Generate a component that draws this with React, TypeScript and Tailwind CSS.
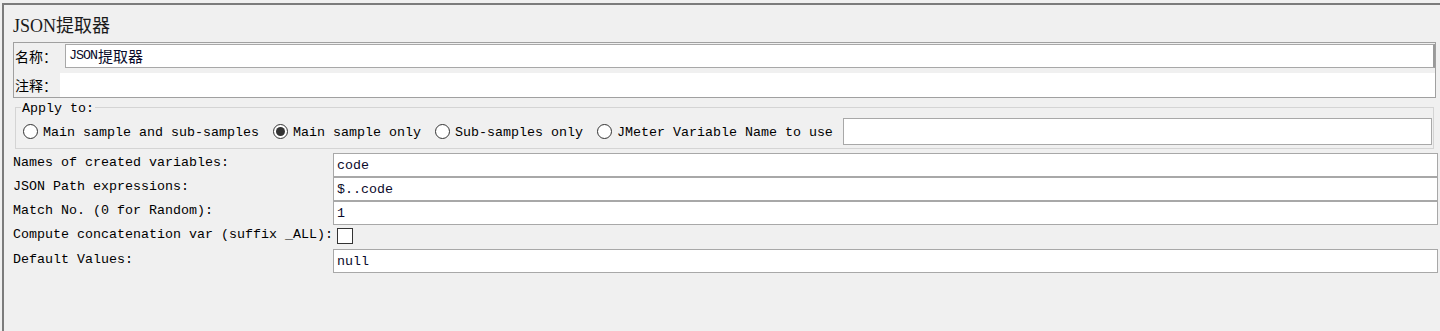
import React from "react";

const mono = "font-['Liberation_Mono','Noto_Sans_CJK_SC',monospace] text-[13.33px]";

function Radio({ checked }: { checked?: boolean }) {
  return (
    <span className="w-[15px] h-[15px] rounded-full border border-[#333] bg-white flex items-center justify-center shrink-0">
      {checked && <span className="w-[9px] h-[9px] rounded-full bg-[#333]" />}
    </span>
  );
}

function RadioItem({ label, checked, last }: { label: string; checked?: boolean; last?: boolean }) {
  return (
    <div className={`flex items-center gap-[5px] ${last ? "mr-[10px]" : "mr-[14px]"}`}>
      <Radio checked={checked} />
      <span className="whitespace-nowrap leading-[16px] pt-[2px]">{label}</span>
    </div>
  );
}

function FieldRow({ label, value, pt = "pt-[2px]" }: { label: string; value: string; pt?: string }) {
  return (
    <div className="flex h-[24px]">
      <div className={`w-[320px] ${pt} leading-[16px] whitespace-nowrap`}>{label}</div>
      <div className="w-[1105px] h-[24px] border border-[#a8a8a8] bg-white pl-[3px] pt-[1px] flex items-center text-[#0a0a2a]">
        {value}
      </div>
    </div>
  );
}

export default function App() {
  return (
    <div className="w-[1440px] h-[331px] bg-[#f0f0f0] pt-[3px] pl-[2px] overflow-hidden text-black">
      <div className="h-full border-t-2 border-l-2 border-[#7c7c7c] pl-[9px]">
        <div className="mt-[8px] h-[26px] leading-[26px] text-[18px] text-[#1a1a1a] font-['Liberation_Serif','Noto_Sans_CJK_SC',serif] whitespace-nowrap">
          JSON提取器
        </div>

        <div className="mt-[3px] w-[1423px] border border-[#a0a0a0]">
          <div className="flex h-[26px] items-center">
            <div className="w-[51px] pl-[1px] text-[14px] font-['Noto_Sans_CJK_SC',sans-serif] leading-[20px]">名称：</div>
            <div className="flex-1 h-[24px] border border-[#a8a8a8] border-r-[#9a9a9a] border-r-2 bg-white pl-[3px] flex items-center whitespace-nowrap text-[#0a0a2a]">
              <span className="font-['Liberation_Mono',monospace] text-[13.33px] tracking-[-1px]">JSON</span>
              <span className="font-['Noto_Sans_CJK_SC',sans-serif] text-[15px] leading-[18px] ml-[1px]">提取器</span>
            </div>
          </div>
          <div className="h-[4px]" />
          <div className="flex h-[24px] items-center">
            <div className="w-[46px] pl-[1px] text-[14px] font-['Noto_Sans_CJK_SC',sans-serif] leading-[20px]">注释：</div>
            <div className="flex-1 h-full bg-white" />
          </div>
        </div>

        <fieldset className={`-mt-[1px] ml-[2px] w-[1419px] border border-[#d4d4d4] ${mono}`}>
          <legend className="ml-[5px] px-[1px] pt-[4px] leading-[16px]">Apply to:</legend>
          <div className="flex items-center pl-[7px] pr-[1px] pt-[1px] pb-[3px]">
            <RadioItem label="Main sample and sub-samples" />
            <RadioItem label="Main sample only" checked />
            <RadioItem label="Sub-samples only" />
            <RadioItem label="JMeter Variable Name to use" last />
            <div className="flex-1 h-[27px] border border-[#a8a8a8] bg-white" />
          </div>
        </fieldset>

        <div className={`mt-[4px] flex flex-col ${mono}`}>
          <FieldRow label="Names of created variables:" value="code" />
          <FieldRow label="JSON Path expressions:" value="$..code" />
          <FieldRow label="Match No. (0 for Random):" value="1" />
          <div className="flex h-[24px]">
            <div className="w-[320px] pt-[2px] leading-[16px] whitespace-nowrap">Compute concatenation var (suffix _ALL):</div>
            <div className="pl-[4px] pt-[3px]">
              <div className="w-[16px] h-[16px] border border-[#333] bg-white" />
            </div>
          </div>
          <FieldRow label="Default Values:" value="null" pt="pt-[3px]" />
        </div>
      </div>
    </div>
  );
}
